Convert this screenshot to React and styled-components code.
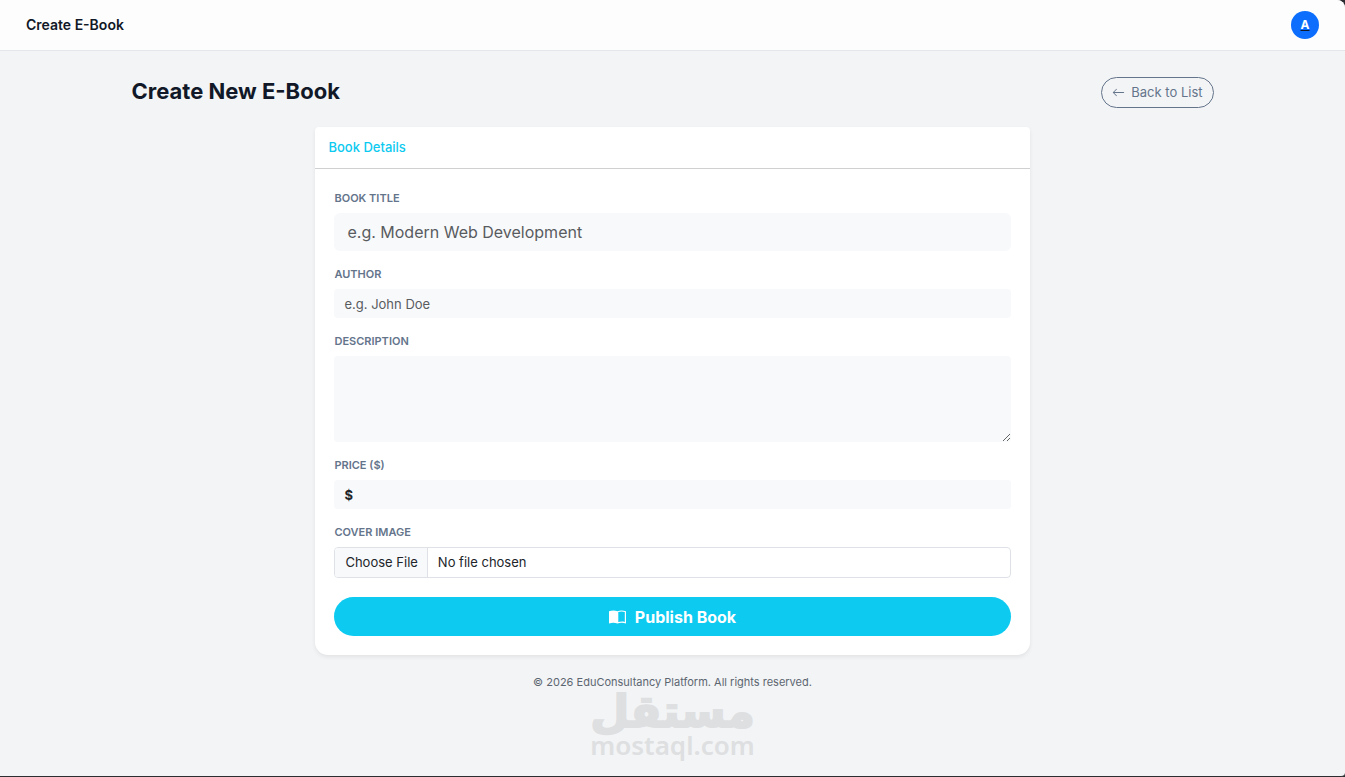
import React, { useState } from 'react';
import styled, { createGlobalStyle } from 'styled-components';
import { BsArrowLeft } from 'react-icons/bs';

const GlobalStyle = createGlobalStyle`
  *, *::before, *::after {
    box-sizing: border-box;
  }
  body {
    margin: 0;
    background: #2c2d31;
    color: #212529;
    font-family: Inter, "Liberation Sans", sans-serif;
    font-size: 13px;
    line-height: 20px;
  }
`

const Page = styled.div`
  display: flex;
  flex-direction: column;
  min-height: 100vh;
  background: #f3f4f6;
  border-bottom: 1px solid #2c2d31;
  border-radius: 0 8px 4px 0;
  overflow: hidden;
`

const TopBar = styled.header`
  display: flex;
  align-items: center;
  justify-content: space-between;
  padding: 11px 26px;
  background: #fdfdfd;
  border-bottom: 1px solid #e3e6ea;
`

const TopTitle = styled.span`
  color: #111827;
  font-size: 14px;
  font-weight: 600;
`

const Avatar = styled.a`
  display: flex;
  align-items: center;
  justify-content: center;
  width: 28px;
  height: 28px;
  border-radius: 50%;
  background: #0d6efd;
  color: #111827;
  text-decoration: underline;
  span {
    color: #fff;
    font-size: 12px;
    font-weight: 700;
  }
`

const Container = styled.main`
  width: 100%;
  max-width: 1106px;
  margin: 0 auto;
  padding: 26px 12px 0;
`

const Heading = styled.div`
  display: flex;
  align-items: flex-start;
  justify-content: space-between;
  margin-bottom: 19px;
  h1 {
    margin: 0;
    color: #111827;
    font-size: 22px;
    font-weight: 700;
    line-height: 28px;
  }
`

const BackLink = styled.a`
  display: flex;
  align-items: center;
  gap: 6px;
  padding: 4px 10px 5px;
  border: 1px solid #64748b;
  border-radius: 16px;
  color: #64748b;
  text-decoration: none;
`

const Card = styled.section`
  width: 66%;
  margin: 0 auto;
  background: #fff;
  border-radius: 4px 4px 13px 13px;
  box-shadow: 0 2px 4px rgba(0, 0, 0, 0.07);
`

const CardHeader = styled.h2`
  margin: 0;
  padding: 10px 13px 11px;
  border-bottom: 1px solid #cfd0d1;
  color: #0dcaf0;
  font-size: 13px;
  font-weight: 500;
  line-height: 20px;
`

const Form = styled.form`
  display: flex;
  flex-direction: column;
  gap: 15px;
  padding: 21px 19px 19px;
`

const Field = styled.div`
  display: flex;
  flex-direction: column;
  gap: 6px;
`

const Label = styled.label`
  color: #64748b;
  font-size: 11px;
  font-weight: 600;
  line-height: 17px;
  text-transform: uppercase;
`

const Input = styled.input`
  width: 100%;
  height: ${props => props.$large ? '38px' : '29px'};
  padding: ${props => props.$large ? '0 13px' : '0 10px'};
  border: 0;
  border-radius: ${props => props.$large ? '6px' : '4px'};
  background: #f8f9fb;
  color: #212529;
  font-family: inherit;
  font-size: ${props => props.$large ? '16px' : '13px'};
  &::placeholder {
    color: #595c5f;
    opacity: 1;
  }
`

const TextArea = styled.textarea`
  display: block;
  width: 100%;
  height: 86px;
  padding: 5px 10px;
  border: 0;
  border-radius: 4px;
  background: #f8f9fb;
  color: #212529;
  font: inherit;
  resize: vertical;
`

const PriceGroup = styled.div`
  display: flex;
  align-items: center;
  border-radius: 4px;
  background: #f8f9fb;
  span {
    padding-left: 10px;
    font-weight: 700;
  }
`

const FileInput = styled.input`
  width: 100%;
  height: 31px;
  border: 1px solid #dee2e6;
  border-radius: 4px;
  background: #fff;
  color: #212529;
  font-family: inherit;
  font-size: 13px;
  line-height: 29px;
  overflow: hidden;
  &::file-selector-button {
    height: 29px;
    margin: 0 10px 0 0;
    padding: 0 9px 0 10px;
    border: 0;
    border-right: 1px solid #dee2e6;
    background: #f8f9fb;
    color: inherit;
    font: inherit;
  }
`

const PublishButton = styled.button`
  display: flex;
  align-items: center;
  justify-content: center;
  gap: 9px;
  height: 39px;
  margin-top: 4px;
  border: 0;
  border-radius: 20px;
  background: #0dcaf0;
  color: #fff;
  font-family: inherit;
  font-size: 16px;
  font-weight: 700;
`

const Footer = styled.footer`
  padding-top: 17px;
  color: #5c6670;
  font-size: 11px;
  text-align: center;
`

const Watermark = styled.div`
  display: flex;
  flex-direction: column;
  align-items: center;
  color: #dedfe1;
`

const WatermarkName = styled.span`
  font-family: "DejaVu Sans", sans-serif;
  font-size: 45px;
  font-weight: 700;
  line-height: 40px;
  -webkit-text-stroke: 2px #dedfe1;
`

const WatermarkSite = styled.span`
  font-family: "Noto Sans", sans-serif;
  font-size: 26px;
  font-weight: 600;
  line-height: 26px;
`

const BookIcon = () => (
  <svg width="17" height="14" viewBox="0 0 17 14" aria-hidden="true">
    <path d="M0 1.2C2.8 .1 6 .1 8.5 1.2C11 .1 14.2 .1 17 1.2V13.4C14 12.4 11 12.4 8.5 13.5C6 12.4 3 12.4 0 13.4Z" fill="#fff" />
    <path d="M9.3 1.9C11.3 1.2 13.7 1.2 15.8 1.9V11.9C13.7 11.4 11.3 11.4 9.3 12.1Z" fill="#0dcaf0" />
  </svg>
)

const App = () => {
  const [book, setBook] = useState({ title: '', author: '', description: '', price: '' })

  const handleChange = (event) => {
    setBook({ ...book, [event.target.name]: event.target.value })
  }

  return (
    <>
      <GlobalStyle />
      <Page>
        <TopBar>
          <TopTitle>Create E-Book</TopTitle>
          <Avatar href="#profile"><span>A</span></Avatar>
        </TopBar>
        <Container>
          <Heading>
            <h1>Create New E-Book</h1>
            <BackLink href="#list">
              <BsArrowLeft size={13} />
              Back to List
            </BackLink>
          </Heading>
          <Card>
            <CardHeader>Book Details</CardHeader>
            <Form onSubmit={event => event.preventDefault()}>
              <Field>
                <Label htmlFor="title">Book Title</Label>
                <Input $large id="title" name="title" placeholder="e.g. Modern Web Development" value={book.title} onChange={handleChange} />
              </Field>
              <Field>
                <Label htmlFor="author">Author</Label>
                <Input id="author" name="author" placeholder="e.g. John Doe" value={book.author} onChange={handleChange} />
              </Field>
              <Field>
                <Label htmlFor="description">Description</Label>
                <TextArea id="description" name="description" value={book.description} onChange={handleChange} />
              </Field>
              <Field>
                <Label htmlFor="price">Price ($)</Label>
                <PriceGroup>
                  <span>$</span>
                  <Input id="price" name="price" type="number" value={book.price} onChange={handleChange} />
                </PriceGroup>
              </Field>
              <Field>
                <Label htmlFor="cover">Cover Image</Label>
                <FileInput id="cover" name="cover" type="file" />
              </Field>
              <PublishButton type="submit">
                <BookIcon />
                Publish Book
              </PublishButton>
            </Form>
          </Card>
        </Container>
        <Footer>© 2026 EduConsultancy Platform. All rights reserved.</Footer>
        <Watermark>
          <WatermarkName lang="ar" dir="rtl">مستقل</WatermarkName>
          <WatermarkSite>mostaql.com</WatermarkSite>
        </Watermark>
      </Page>
    </>
  );
}

export default App;
